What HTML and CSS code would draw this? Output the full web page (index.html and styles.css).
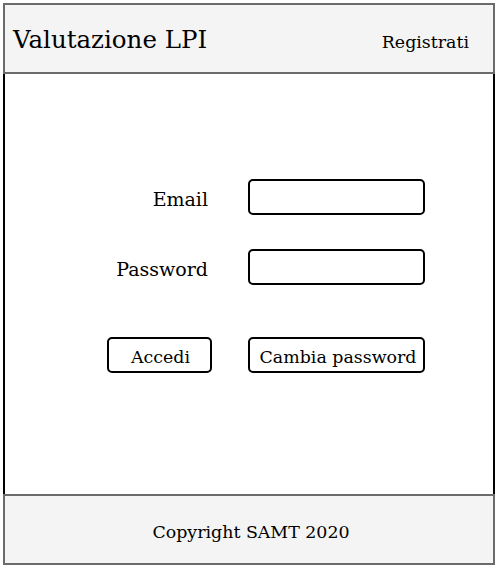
FILE: index.html
```html
<!DOCTYPE html>
<html lang="it">
<head>
<meta charset="utf-8">
<title>Valutazione LPI</title>
<link rel="stylesheet" href="styles.css">
</head>
<body>
<div class="page">
  <header class="header">
    <h1 class="title">Valutazione LPI</h1>
    <a class="register" href="#">Registrati</a>
  </header>
  <main class="main">
    <form class="form">
      <label class="label" for="email">Email</label>
      <input class="field" id="email" type="email">
      <label class="label" for="pwd">Password</label>
      <input class="field" id="pwd" type="password">
      <button class="btn btn-login" type="button">Accedi</button>
      <button class="btn btn-change" type="button">Cambia password</button>
    </form>
  </main>
  <footer class="footer">Copyright SAMT 2020</footer>
</div>
</body>
</html>
```

FILE: styles.css
```css
* { box-sizing: border-box; }
html, body { margin: 0; padding: 0; background: #ffffff; }
body { font-family: "DejaVu Serif", serif; color: #000; }
.page {
  margin: 3px 0 0 3px;
  width: 492px;
  display: flex;
  flex-direction: column;
}
.header {
  height: 71px;
  background: #f4f4f4;
  border: 2px solid #6b6b6b;
  display: flex;
  align-items: center;
  justify-content: space-between;
  padding: 2px 24px 0 8px;
}
.title {
  margin: 0;
  font-weight: normal;
  font-size: 24.5px;
}
.register {
  color: #000;
  text-decoration: none;
  font-size: 17.4px;
  padding-top: 4px;
}
.main {
  height: 420px;
  border-left: 2px solid #000;
  border-right: 2px solid #000;
  padding: 105px 0 0 102px;
}
.form {
  display: grid;
  grid-template-columns: 105px 176px;
  grid-auto-rows: 36px;
  column-gap: 36px;
  row-gap: 34px;
}
.label {
  font-size: 19px;
  text-align: right;
  padding: 3px 4px 0 0;
  align-self: center;
}
.field {
  width: 177px;
  height: 36px;
  border: 2px solid #000;
  border-radius: 5px;
  background: #fff;
}
.btn {
  height: 36px;
  border: 2px solid #000;
  border-radius: 5px;
  background: #fff;
  font-family: "DejaVu Serif", serif;
  font-size: 17.4px;
  color: #000;
  padding: 4px 0 0;
  margin-top: 18px;
  white-space: nowrap;
}
.btn-login { padding-left: 2px; }
.btn-change { width: 177px; padding-left: 3px; }
.footer {
  height: 71px;
  background: #f4f4f4;
  border: 2px solid #6b6b6b;
  display: flex;
  align-items: center;
  justify-content: center;
  font-size: 17.4px;
  padding: 4px 0 0 4px;
}
```
